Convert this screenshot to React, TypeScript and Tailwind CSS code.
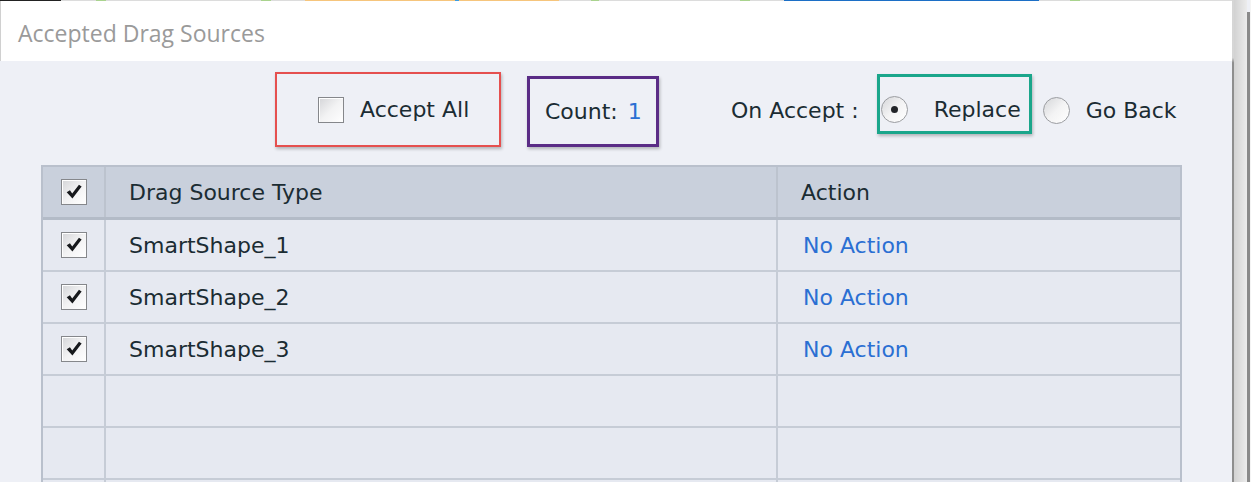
import React from 'react';

const FONT = { fontFamily: '"DejaVu Sans", Verdana, sans-serif' };

function CheckBox({ checked }: { checked: boolean }) {
  return (
    <div className="flex h-[26px] w-[26px] items-center justify-center border border-[#85878b] bg-gradient-to-br from-[#d4d5d8] via-[#f2f2f3] to-[#ffffff] shadow-[inset_1px_1px_0_#ffffff]">
      {checked && (
        <svg width="18" height="18" viewBox="0 0 16 16">
          <path d="M1.5 8.2 L4.4 6.4 L6.4 9.4 L12.4 1.6 L14.8 3.2 L6.6 13.8 Z" fill="#17191c" />
        </svg>
      )}
    </div>
  );
}

function Radio({ selected }: { selected: boolean }) {
  return (
    <div className="flex h-[27px] w-[27px] items-center justify-center rounded-full border border-[#9b9da1] bg-gradient-to-br from-[#d5d6d9] via-[#f3f3f4] to-[#ffffff]">
      {selected && <div className="h-[7px] w-[7px] rounded-full bg-[#222428]" />}
    </div>
  );
}

const rows = [
  { name: 'SmartShape_1', action: 'No Action' },
  { name: 'SmartShape_2', action: 'No Action' },
  { name: 'SmartShape_3', action: 'No Action' },
  { name: '', action: '' },
  { name: '', action: '' },
  { name: '', action: '' },
];

export default function App() {
  return (
    <div className="flex h-[482px] w-[1251px] overflow-hidden bg-[#eef0f6]" style={FONT}>
      {/* dialog */}
      <div className="flex w-[1232px] flex-col">
        {/* top strip from the window behind */}
        <div className="flex h-px shrink-0 bg-[#dcdcdc]">
          <div className="w-[61px] bg-[#222]" />
          <div className="w-[35px]" />
          <div className="w-[10px] bg-[#a9d38e]" />
          <div className="w-[155px]" />
          <div className="w-[10px] bg-[#a9d38e]" />
          <div className="w-[34px]" />
          <div className="w-[150px] bg-[#f6c57c]" />
          <div className="w-[4px] bg-[#3b9be0]" />
          <div className="w-[100px] bg-[#f6c57c]" />
          <div className="w-[32px]" />
          <div className="w-[8px] bg-[#a9d38e]" />
          <div className="w-[141px]" />
          <div className="w-[10px] bg-[#a9d38e]" />
          <div className="w-[34px]" />
          <div className="w-[255px] bg-[#1c6fc6]" />
          <div className="w-[31px]" />
          <div className="w-[10px] bg-[#a9d38e]" />
        </div>

        {/* title bar */}
        <div className="flex h-[60px] shrink-0 items-center border-l border-[#d0d0d0] bg-white pl-[17px]">
          <span className="pt-[4px] text-[23px] text-[#9a9a9a]" style={{ fontFamily: '"Open Sans", "Noto Sans", sans-serif' }}>
            Accepted Drag Sources
          </span>
        </div>

        {/* toolbar */}
        <div className="flex h-[104px] shrink-0 items-start pl-[275px] text-[22px] text-[#1b2c33]">
          <div className="mt-[11px] flex h-[75px] w-[226px] items-center border-2 border-[#e5504f] pl-[41px] shadow-[1px_2px_3px_rgba(0,0,0,0.25)]">
            <CheckBox checked={false} />
            <span className="ml-[16px]">Accept All</span>
          </div>
          <div className="ml-[26px] mt-[15px] flex h-[71px] w-[132px] items-center border-[3px] border-[#5a2c86] pl-[15px] shadow-[1px_2px_3px_rgba(0,0,0,0.25)]">
            <span>Count:</span>
            <span className="ml-[10px] text-[#2b6fd3]">1</span>
          </div>
          <div className="ml-[72px] mt-[33px]">On Accept :</div>
          <div className="ml-[18px] mt-[13px] flex h-[60px] w-[155px] items-start border-[3px] border-[#1aa68b] pl-[1px] pt-[16px] shadow-[1px_2px_3px_rgba(0,0,0,0.25)]">
            <div className="flex items-center">
              <Radio selected />
              <span className="ml-[26px]">Replace</span>
            </div>
          </div>
          <div className="ml-[11px] mt-[33px] flex items-center">
            <Radio selected={false} />
            <span className="ml-[16px]">Go Back</span>
          </div>
        </div>

        {/* table */}
        <div className="ml-[41px] w-[1141px] border-x-2 border-t-2 border-[#b9c0cc] text-[22px] text-[#1b2c33]">
          <div className="flex h-[53px] border-b-[3px] border-[#b3bbc7] bg-[#c9d0dc]">
            <div className="flex w-[63px] items-center justify-center border-r-2 border-[#bcc3ce]">
              <CheckBox checked />
            </div>
            <div className="flex w-[672px] items-center border-r-2 border-[#bcc3ce] pl-[23px]">Drag Source Type</div>
            <div className="flex flex-1 items-center pl-[23px]">Action</div>
          </div>
          {rows.map((r, i) => (
            <div key={i} className="flex h-[52px] border-b-2 border-[#c6ccd6] bg-[#e6e9f1]">
              <div className="flex w-[63px] items-center justify-center border-r-2 border-[#c6ccd6]">
                {r.name && <CheckBox checked />}
              </div>
              <div className="flex w-[672px] items-center border-r-2 border-[#c6ccd6] pl-[23px]">{r.name}</div>
              <div className="flex flex-1 items-center pl-[25px] text-[#2b6fd3]">{r.action}</div>
            </div>
          ))}
        </div>
      </div>

      {/* window edge / shadow on the right */}
      <div className="flex flex-1">
        <div className="w-[2px] bg-gradient-to-b from-[#d6d6d6] from-[12%] to-[#8e8e8e] to-[13%]" />
        <div className="w-[13px] bg-gradient-to-r from-[#d2d2d2] to-[#ececec]" />
        <div className="mt-[12px] w-[3px] bg-[#8a8a8a]" />
        <div className="flex-1 bg-[#f4f4f4]" />
      </div>
    </div>
  );
}
